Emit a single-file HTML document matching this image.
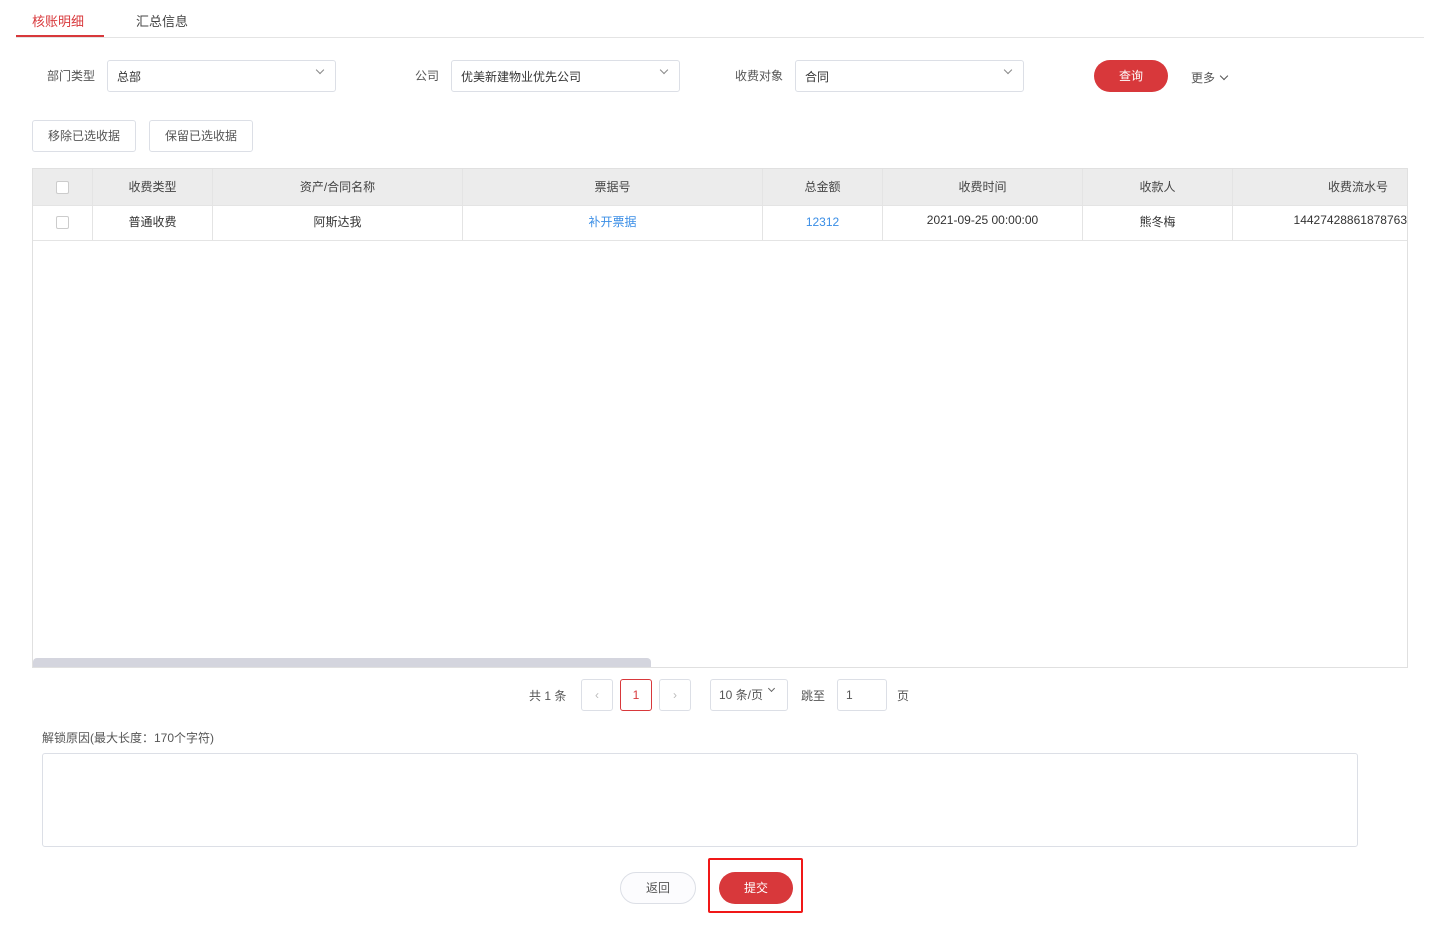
<!DOCTYPE html>
<html><head><meta charset="utf-8"><style>
*{box-sizing:border-box;margin:0;padding:0}
body{width:1437px;height:933px;background:#fff;font-family:"Liberation Sans","Noto Sans CJK SC",sans-serif;font-size:12px;color:#333;position:relative;overflow:hidden}
.a{position:absolute}
.sel{position:absolute;height:32px;border:1px solid #dcdfe6;border-radius:3px;padding:0 9px;line-height:32px;color:#333}
.sel:after{content:"";position:absolute;right:12px;top:6px;width:5px;height:5px;border-right:1px solid #888;border-bottom:1px solid #888;transform:rotate(45deg)}
.lbl{position:absolute;color:#555}
.btn{position:absolute;height:32px;border:1px solid #dcdfe6;border-radius:3px;line-height:30px;text-align:center;color:#555}
.th,.td{position:absolute;text-align:center;border-right:1px solid #e4e4e4}
.th{top:169px;height:36px;line-height:36px;background:#ececec;color:#444}
.td{top:206px;height:34px;line-height:32px}
.cb{position:absolute;width:13px;height:13px;border:1px solid #ccc;border-radius:2px;background:#fff}
.pg{position:absolute;top:679px;height:32px;border:1px solid #dcdfe6;border-radius:3px;line-height:30px;text-align:center;color:#bbb}
</style></head><body>
<div class="a" style="left:16px;top:37px;width:1408px;height:1px;background:#e4e4e4"></div>
<div class="a" style="left:32px;top:11px;color:#d8383b;font-size:13px">核账明细</div>
<div class="a" style="left:16px;top:35px;width:88px;height:2px;background:#d8383b"></div>
<div class="a" style="left:136px;top:11px;color:#444;font-size:13px">汇总信息</div>

<div class="lbl" style="left:47px;top:67px">部门类型</div>
<div class="sel" style="left:107px;top:60px;width:229px">总部</div>
<div class="lbl" style="left:415px;top:67px">公司</div>
<div class="sel" style="left:451px;top:60px;width:229px">优美新建物业优先公司</div>
<div class="lbl" style="left:735px;top:67px">收费对象</div>
<div class="sel" style="left:795px;top:60px;width:229px">合同</div>
<div class="a" style="left:1094px;top:60px;width:74px;height:32px;border-radius:16px;background:#d8383b;color:#fff;text-align:center;line-height:32px">查询</div>
<div class="a" style="left:1191px;top:69px;color:#555">更多 <span style="display:inline-block;width:6px;height:6px;border-right:1px solid #555;border-bottom:1px solid #555;transform:rotate(45deg);margin-left:3px;position:relative;top:-3px"></span></div>

<div class="btn" style="left:32px;top:120px;width:104px">移除已选收据</div>
<div class="btn" style="left:149px;top:120px;width:104px">保留已选收据</div>

<div class="a" style="left:32px;top:168px;width:1376px;height:500px;border:1px solid #e0e0e0"></div>
<div class="th" style="left:33px;width:60px"></div><div class="cb" style="left:56px;top:181px"></div>
<div class="th" style="left:93px;width:120px">收费类型</div>
<div class="th" style="left:213px;width:250px">资产/合同名称</div>
<div class="th" style="left:463px;width:300px">票据号</div>
<div class="th" style="left:763px;width:120px">总金额</div>
<div class="th" style="left:883px;width:200px">收费时间</div>
<div class="th" style="left:1083px;width:150px">收款人</div>
<div class="th" style="left:1233px;width:174px;border-right:none;text-align:right;padding-right:19px">收费流水号</div>
<div class="a" style="left:33px;top:205px;width:1374px;height:1px;background:#e4e4e4"></div>
<div class="td" style="left:33px;width:60px"></div><div class="cb" style="left:56px;top:216px"></div>
<div class="td" style="left:93px;width:120px">普通收费</div>
<div class="td" style="left:213px;width:250px">阿斯达我</div>
<div class="td" style="left:463px;width:300px;color:#3a8ee6">补开票据</div>
<div class="td" style="left:763px;width:120px;color:#3a8ee6">12312</div>
<div class="td" style="left:883px;width:200px;line-height:28px">2021-09-25 00:00:00</div>
<div class="td" style="left:1083px;width:150px">熊冬梅</div>
<div class="td" style="left:1233px;width:174px;border-right:none;text-align:right;line-height:28px">14427428861878763</div>
<div class="a" style="left:33px;top:240px;width:1374px;height:1px;background:#e4e4e4"></div>
<div class="a" style="left:33px;top:658px;width:618px;height:9px;background:#d4d5de;border-radius:4px 4px 0 0"></div>

<div class="a" style="left:529px;top:687px;color:#555">共 1 条</div>
<div class="pg" style="left:581px;width:32px">‹</div>
<div class="pg" style="left:620px;width:32px;border-color:#d8383b;color:#d8383b">1</div>
<div class="pg" style="left:659px;width:32px">›</div>
<div class="pg" style="left:710px;width:78px;color:#555;text-align:left;padding-left:8px">10 条/页<span style="position:absolute;right:13px;top:6px;width:5px;height:5px;border-right:1px solid #666;border-bottom:1px solid #666;transform:rotate(45deg)"></span></div>
<div class="a" style="left:801px;top:687px;color:#555">跳至</div>
<div class="pg" style="left:837px;width:50px;color:#555;text-align:left;padding-left:8px">1</div>
<div class="a" style="left:897px;top:687px;color:#555">页</div>

<div class="a" style="left:42px;top:729px;color:#555">解锁原因(最大长度：170个字符)</div>
<div class="a" style="left:42px;top:753px;width:1316px;height:94px;border:1px solid #dcdfe6;border-radius:3px"></div>

<div class="a" style="left:620px;top:872px;width:76px;height:32px;border:1px solid #dcdfe6;border-radius:16px;background:#fcfcfe;text-align:center;line-height:30px;color:#555">返回</div>
<div class="a" style="left:708px;top:858px;width:95px;height:55px;border:2px solid #f01818;border-radius:2px"></div>
<div class="a" style="left:719px;top:872px;width:74px;height:32px;border-radius:16px;background:#d8383b;color:#fff;text-align:center;line-height:32px">提交</div>
</body></html>
